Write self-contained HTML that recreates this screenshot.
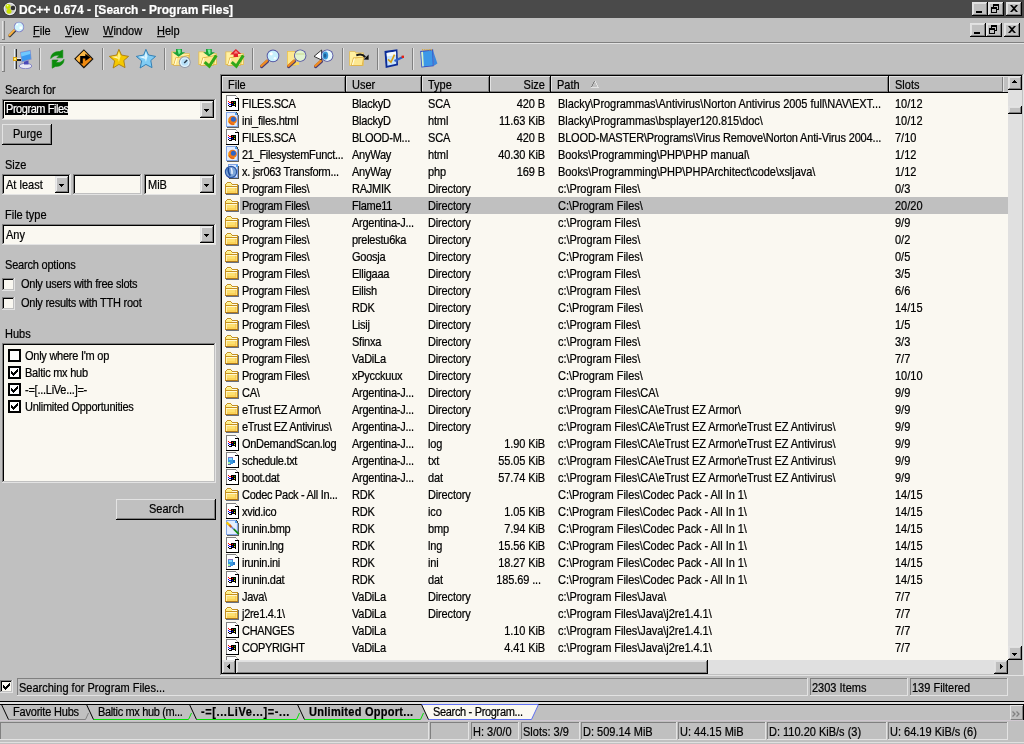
<!DOCTYPE html><html><head><meta charset="utf-8"><style>
html,body{margin:0;padding:0}
body{width:1024px;height:744px;overflow:hidden;background:#c0c0c0;position:relative;font-family:"Liberation Sans",sans-serif;font-size:11px;color:#000}
div,span,svg{position:absolute}
.t{white-space:pre;line-height:13px;font-size:11px;transform:scaleY(1.125);transform-origin:0 2px;-webkit-text-stroke-width:0.2px}
#w{left:0;top:0;width:1024px;height:744px;overflow:hidden;will-change:transform}
.b{font-weight:bold}
</style></head><body><div id="w">
<div style="left:0px;top:0px;width:1024px;height:18px;background:#4a4a4a;"></div>
<svg style="left:0px;top:0px" width="20" height="18" viewBox="0 0 20 18">
<circle cx="9.9" cy="8.9" r="7" fill="#101010" opacity="0.5"/><circle cx="9.9" cy="8.9" r="6.3" fill="#e8e8ea"/><circle cx="9.9" cy="8.9" r="5" fill="#c8c8cc"/>
<circle cx="13" cy="8" r="2.3" fill="#303030"/><circle cx="8" cy="6.6" r="2.5" fill="#c8e000"/><circle cx="9" cy="11.2" r="2.5" fill="#c8e000"/><circle cx="7.6" cy="5.6" r="0.9" fill="#f0ffa0"/></svg>
<span class="t b" style="left:19px;top:3px;font-size:12px;line-height:14px;color:#fff;transform:none">DC++ 0.674 - [Search - Program Files]</span>
<div style="left:972px;top:2px;width:16px;height:14px;background:#c0c0c0;"></div>
<div style="left:972px;top:2px;width:15px;height:1px;background:#e3e3e3;"></div>
<div style="left:972px;top:2px;width:1px;height:13px;background:#e3e3e3;"></div>
<div style="left:972px;top:15px;width:16px;height:1px;background:#000;"></div>
<div style="left:987px;top:2px;width:1px;height:14px;background:#000;"></div>
<div style="left:973px;top:14px;width:14px;height:1px;background:#808080;"></div>
<div style="left:986px;top:3px;width:1px;height:12px;background:#808080;"></div>
<div style="left:973px;top:3px;width:13px;height:1px;background:#e0e0e0;"></div>
<div style="left:973px;top:3px;width:1px;height:11px;background:#e0e0e0;"></div>
<div style="left:976px;top:11px;width:6px;height:2px;background:#000;"></div>
<div style="left:988px;top:2px;width:16px;height:14px;background:#c0c0c0;"></div>
<div style="left:988px;top:2px;width:15px;height:1px;background:#e3e3e3;"></div>
<div style="left:988px;top:2px;width:1px;height:13px;background:#e3e3e3;"></div>
<div style="left:988px;top:15px;width:16px;height:1px;background:#000;"></div>
<div style="left:1003px;top:2px;width:1px;height:14px;background:#000;"></div>
<div style="left:989px;top:14px;width:14px;height:1px;background:#808080;"></div>
<div style="left:1002px;top:3px;width:1px;height:12px;background:#808080;"></div>
<div style="left:989px;top:3px;width:13px;height:1px;background:#e0e0e0;"></div>
<div style="left:989px;top:3px;width:1px;height:11px;background:#e0e0e0;"></div>
<svg style="left:991px;top:4px" width="9" height="9" viewBox="0 0 9 9"><path d="M2 0h6v6h-2v-1h1v-3h-4v1h-1z M0 3h6v6h-6z M1 5v3h4v-3z" fill="#000" fill-rule="evenodd"/></svg>
<div style="left:1006px;top:2px;width:16px;height:14px;background:#c0c0c0;"></div>
<div style="left:1006px;top:2px;width:15px;height:1px;background:#e3e3e3;"></div>
<div style="left:1006px;top:2px;width:1px;height:13px;background:#e3e3e3;"></div>
<div style="left:1006px;top:15px;width:16px;height:1px;background:#000;"></div>
<div style="left:1021px;top:2px;width:1px;height:14px;background:#000;"></div>
<div style="left:1007px;top:14px;width:14px;height:1px;background:#808080;"></div>
<div style="left:1020px;top:3px;width:1px;height:12px;background:#808080;"></div>
<div style="left:1007px;top:3px;width:13px;height:1px;background:#e0e0e0;"></div>
<div style="left:1007px;top:3px;width:1px;height:11px;background:#e0e0e0;"></div>
<svg style="left:1010px;top:5px" width="8" height="7" viewBox="0 0 8 7"><path d="M0 0h2l2 2l2-2h2v0l-3 3.5l3 3.5h-2l-2-2l-2 2h-2l3-3.5z" fill="#000"/></svg>
<div style="left:2px;top:21px;width:1px;height:18px;background:#e3e3e3;"></div>
<div style="left:3px;top:21px;width:1px;height:18px;background:#c0c0c0;"></div>
<div style="left:4px;top:21px;width:1px;height:19px;background:#808080;"></div>
<div style="left:2px;top:39px;width:3px;height:1px;background:#808080;"></div>
<svg style="left:0px;top:18px" width="30" height="24" viewBox="0 0 30 24">
<path d="M9.8 17.6L15 12.4" stroke="#383838" stroke-width="3" stroke-linecap="round"/><path d="M9.4 17.2L14.4 12" stroke="#f8b040" stroke-width="2" stroke-linecap="round"/>
<circle cx="19" cy="9" r="5.2" fill="#8080c8"/><circle cx="19" cy="9" r="4.4" fill="#d0f4fc"/><rect x="19.5" y="8.5" width="2.5" height="2.5" fill="#fff"/><circle cx="17" cy="6.5" r="1" fill="#fff"/></svg>
<span class="t " style="left:33px;top:24px;"><u>F</u>ile</span>
<span class="t " style="left:65px;top:24px;"><u>V</u>iew</span>
<span class="t " style="left:103px;top:24px;"><u>W</u>indow</span>
<span class="t " style="left:157px;top:24px;"><u>H</u>elp</span>
<div style="left:970px;top:23px;width:16px;height:14px;background:#c0c0c0;"></div>
<div style="left:970px;top:23px;width:15px;height:1px;background:#e3e3e3;"></div>
<div style="left:970px;top:23px;width:1px;height:13px;background:#e3e3e3;"></div>
<div style="left:970px;top:36px;width:16px;height:1px;background:#000;"></div>
<div style="left:985px;top:23px;width:1px;height:14px;background:#000;"></div>
<div style="left:971px;top:35px;width:14px;height:1px;background:#808080;"></div>
<div style="left:984px;top:24px;width:1px;height:12px;background:#808080;"></div>
<div style="left:971px;top:24px;width:13px;height:1px;background:#e0e0e0;"></div>
<div style="left:971px;top:24px;width:1px;height:11px;background:#e0e0e0;"></div>
<div style="left:974px;top:32px;width:6px;height:2px;background:#000;"></div>
<div style="left:986px;top:23px;width:16px;height:14px;background:#c0c0c0;"></div>
<div style="left:986px;top:23px;width:15px;height:1px;background:#e3e3e3;"></div>
<div style="left:986px;top:23px;width:1px;height:13px;background:#e3e3e3;"></div>
<div style="left:986px;top:36px;width:16px;height:1px;background:#000;"></div>
<div style="left:1001px;top:23px;width:1px;height:14px;background:#000;"></div>
<div style="left:987px;top:35px;width:14px;height:1px;background:#808080;"></div>
<div style="left:1000px;top:24px;width:1px;height:12px;background:#808080;"></div>
<div style="left:987px;top:24px;width:13px;height:1px;background:#e0e0e0;"></div>
<div style="left:987px;top:24px;width:1px;height:11px;background:#e0e0e0;"></div>
<svg style="left:989px;top:25px" width="9" height="9" viewBox="0 0 9 9"><path d="M2 0h6v6h-2v-1h1v-3h-4v1h-1z M0 3h6v6h-6z M1 5v3h4v-3z" fill="#000" fill-rule="evenodd"/></svg>
<div style="left:1004px;top:23px;width:16px;height:14px;background:#c0c0c0;"></div>
<div style="left:1004px;top:23px;width:15px;height:1px;background:#e3e3e3;"></div>
<div style="left:1004px;top:23px;width:1px;height:13px;background:#e3e3e3;"></div>
<div style="left:1004px;top:36px;width:16px;height:1px;background:#000;"></div>
<div style="left:1019px;top:23px;width:1px;height:14px;background:#000;"></div>
<div style="left:1005px;top:35px;width:14px;height:1px;background:#808080;"></div>
<div style="left:1018px;top:24px;width:1px;height:12px;background:#808080;"></div>
<div style="left:1005px;top:24px;width:13px;height:1px;background:#e0e0e0;"></div>
<div style="left:1005px;top:24px;width:1px;height:11px;background:#e0e0e0;"></div>
<svg style="left:1008px;top:26px" width="8" height="7" viewBox="0 0 8 7"><path d="M0 0h2l2 2l2-2h2v0l-3 3.5l3 3.5h-2l-2-2l-2 2h-2l3-3.5z" fill="#000"/></svg>
<div style="left:0px;top:42px;width:1024px;height:1px;background:#808080;"></div>
<div style="left:0px;top:43px;width:1024px;height:1px;background:#e3e3e3;"></div>
<div style="left:2px;top:46px;width:1px;height:25px;background:#e3e3e3;"></div>
<div style="left:3px;top:46px;width:1px;height:25px;background:#c0c0c0;"></div>
<div style="left:4px;top:46px;width:1px;height:26px;background:#808080;"></div>
<div style="left:2px;top:71px;width:3px;height:1px;background:#808080;"></div>
<div style="left:39px;top:48px;width:1px;height:22px;background:#808080;"></div>
<div style="left:40px;top:48px;width:1px;height:22px;background:#e3e3e3;"></div>
<div style="left:102px;top:48px;width:1px;height:22px;background:#808080;"></div>
<div style="left:103px;top:48px;width:1px;height:22px;background:#e3e3e3;"></div>
<div style="left:164px;top:48px;width:1px;height:22px;background:#808080;"></div>
<div style="left:165px;top:48px;width:1px;height:22px;background:#e3e3e3;"></div>
<div style="left:252px;top:48px;width:1px;height:22px;background:#808080;"></div>
<div style="left:253px;top:48px;width:1px;height:22px;background:#e3e3e3;"></div>
<div style="left:342px;top:48px;width:1px;height:22px;background:#808080;"></div>
<div style="left:343px;top:48px;width:1px;height:22px;background:#e3e3e3;"></div>
<div style="left:377px;top:48px;width:1px;height:22px;background:#808080;"></div>
<div style="left:378px;top:48px;width:1px;height:22px;background:#e3e3e3;"></div>
<div style="left:412px;top:48px;width:1px;height:22px;background:#808080;"></div>
<div style="left:413px;top:48px;width:1px;height:22px;background:#e3e3e3;"></div>
<svg style="left:12px;top:49px" width="20" height="20" viewBox="0 0 20 20"><rect x="2" y="0" width="3" height="20" fill="#2a2a2a"/><rect x="2" y="0" width="1" height="20" fill="#e8eef4"/><rect x="3" y="0" width="1" height="20" fill="#98a0a8"/>
<rect x="5" y="10" width="4" height="2" fill="#202020"/><rect x="5" y="9" width="4" height="1" fill="#e8e8e8"/>
<rect x="1" y="8" width="4" height="4" fill="#d8a010"/><rect x="2" y="9" width="2" height="2" fill="#fff070"/>
<ellipse cx="13.5" cy="17" rx="6.3" ry="2.7" fill="#e8e8f4" stroke="#7878c0" stroke-width="0.9"/>
<path d="M12 12.5l4.5-1.2v4.2h-4.5z" fill="#4848b8"/>
<path d="M8 3L18.6 0.8L19.6 10.4L9.6 13.4z" fill="#8890c8"/><path d="M8.9 3.7L18 1.9L18.8 9.8L10.2 12.3z" fill="#3a98f0"/><path d="M8.9 3.7L18 1.9L18.3 5L9.4 7.5z" fill="#70c8ff"/></svg>
<svg style="left:47px;top:49px" width="20" height="20" viewBox="0 0 20 20"><g fill="#0c8c0c" stroke="#0c8c0c" stroke-width="0.6">
<path d="M3.8 9.6C3.6 5.2 7.5 2.2 12.6 2.6L15.8 1V8.8H9.8L12.2 6.4C8.8 5.8 5.6 7.2 3.8 9.6Z"/>
<path d="M17 10.2C17.2 14.8 13.4 17.8 8.4 17.4L5.2 19.2V11H11.2L8.8 13.4C12.2 14.2 15.2 12.8 17 10.2Z"/></g></svg>
<svg style="left:74px;top:49px" width="20" height="20" viewBox="0 0 20 20"><path d="M9.9 0.2L19.6 9.9L9.9 19.4L0.2 9.7z" fill="#141008"/><path d="M9.9 1.8L18 9.9L9.9 17.8L1.8 9.7z" fill="#f08a10"/><path d="M9.9 1.8L13 4.9L4.8 12.9L1.8 9.7z" fill="#f8b848"/>
<path d="M7.5 14.5V8.2H12.5" stroke="#000" stroke-width="2.6" fill="none"/><path d="M11.3 4.8L16.3 8.4L11.3 12z" fill="#000"/></svg>
<svg style="left:109px;top:49px" width="20" height="20" viewBox="0 0 20 20"><path d="M9.9 0.3L12.5 6L19.6 7.4L14.8 11.5L16 18.6L9.9 15.4L4.1 19L5.7 11.9L0.3 7.4L7.7 6Z" fill="#f4c800" stroke="#a87a10" stroke-width="0.9" stroke-linejoin="round"/><path d="M9.9 2.5L11.6 7L9.9 13L8.4 7z" fill="#fff27a"/><path d="M2.5 7.8L8 7.2L9.5 10z" fill="#fff6b0"/></svg>
<svg style="left:136px;top:49px" width="20" height="20" viewBox="0 0 20 20"><path d="M9.9 0.3L12.5 6L19.6 7.4L14.8 11.5L16 18.6L9.9 15.4L4.1 19L5.7 11.9L0.3 7.4L7.7 6Z" fill="#80ccf4" stroke="#2878b0" stroke-width="0.9" stroke-linejoin="round"/><path d="M9.9 2.5L11.6 7L9.9 13L8.4 7z" fill="#d8f4ff"/><path d="M2.5 7.8L8 7.2L9.5 10z" fill="#e8f8ff"/></svg>
<svg style="left:171px;top:49px" width="20" height="20" viewBox="0 0 20 20"><path d="M0.4 2.4H6.6L8 4.2H18.8V16H0.4z" fill="#e8c050"/><path d="M1.3 3.2H6.2L7.6 5H18V15H1.3z" fill="#fff0a0"/>
<path d="M2.2 16.8L4.5 8.4L18.8 5.8L15.6 16.8z" fill="#e0b040"/><path d="M3.2 16L5.2 9.2L17.8 6.8L15 16z" fill="#fde890"/><path d="M3.2 16L5.2 9.2L6.4 9L4.4 16z" fill="#fffce0"/><path d="M5 0H11V3.2H14.2L7.6 7.8L1.4 3.2H5z" fill="#18a038"/><path d="M6.4 0.6H9.6V3.8L7.8 5.6z" fill="#78f098"/>
<circle cx="13.8" cy="13.2" r="5.9" fill="#9098a8"/><circle cx="13.8" cy="13.2" r="4.9" fill="#e4f4fc"/><circle cx="13.8" cy="13.2" r="3.6" fill="#b8e0f8"/><path d="M13.2 14L16.2 11" stroke="#283848" stroke-width="1.4"/></svg>
<svg style="left:198px;top:49px" width="20" height="20" viewBox="0 0 20 20"><path d="M0.4 2.4H6.6L8 4.2H18.8V16H0.4z" fill="#e8c050"/><path d="M1.3 3.2H6.2L7.6 5H18V15H1.3z" fill="#fff0a0"/>
<path d="M2.2 16.8L4.5 8.4L18.8 5.8L15.6 16.8z" fill="#e0b040"/><path d="M3.2 16L5.2 9.2L17.8 6.8L15 16z" fill="#fde890"/><path d="M3.2 16L5.2 9.2L6.4 9L4.4 16z" fill="#fffce0"/><path d="M8 0H13.8V3.2H17L10.9 7.4L5.1 3.2H8z" fill="#18a038"/><path d="M9.5 0.6H12.5V4.5L10.9 5.6z" fill="#78f098"/>
<path d="M6.7 13.2L11.3 17.2L18.3 6.4" stroke="#30a818" stroke-width="3" fill="none" stroke-linejoin="miter"/></svg>
<svg style="left:225px;top:49px" width="20" height="20" viewBox="0 0 20 20"><path d="M0.4 2.4H6.6L8 4.2H18.8V16H0.4z" fill="#e8c050"/><path d="M1.3 3.2H6.2L7.6 5H18V15H1.3z" fill="#fff0a0"/>
<path d="M2.2 16.8L4.5 8.4L18.8 5.8L15.6 16.8z" fill="#e0b040"/><path d="M3.2 16L5.2 9.2L17.8 6.8L15 16z" fill="#fde890"/><path d="M3.2 16L5.2 9.2L6.4 9L4.4 16z" fill="#fffce0"/><path d="M10.9 0L16.2 4.9H13V8H8.6V5.4H5.1z" fill="#e02028"/><path d="M10.9 1.6L13.6 4.6H8.6z" fill="#f88080"/>
<path d="M6.7 13.2L11.3 17.2L18.3 6.4" stroke="#30a818" stroke-width="3" fill="none" stroke-linejoin="miter"/></svg>
<svg style="left:260px;top:49px" width="20" height="20" viewBox="0 0 20 20"><path d="M1.6 17.4L7.2 12.4" stroke="#4a3a70" stroke-width="3.4" stroke-linecap="round"/><path d="M1.3 16.8L6.8 11.8" stroke="#f08c20" stroke-width="2.4" stroke-linecap="round"/><circle cx="13" cy="6.9" r="6.3" fill="#5050a0"/><circle cx="13" cy="6.9" r="5.4" fill="#c8f0fc"/><circle cx="11.2" cy="4.8" r="1.6" fill="#fff"/><circle cx="15" cy="9.2" r="1.3" fill="#f4fcff"/></svg>
<svg style="left:287px;top:49px" width="20" height="20" viewBox="0 0 20 20"><path d="M0 2H8.7V16.8H0z" fill="#e8c050"/><path d="M0.8 2.8H8V16H0.8z" fill="#fde890"/><path d="M4 13H12V16H3z" fill="#f8d860"/><path d="M1.6 17.4L7.2 12.4" stroke="#4a3a70" stroke-width="3.4" stroke-linecap="round"/><path d="M1.3 16.8L6.8 11.8" stroke="#f08c20" stroke-width="2.4" stroke-linecap="round"/><circle cx="13.2" cy="6.6" r="6.2" fill="#5050a0"/><circle cx="13.2" cy="6.6" r="5.3" fill="#e0f4d0"/><path d="M8.5 5H17.5" stroke="#c8d890" stroke-width="1"/></svg>
<svg style="left:314px;top:49px" width="20" height="20" viewBox="0 0 20 20"><path d="M1.6 17.4L7.2 12.4" stroke="#4a3a70" stroke-width="3.4" stroke-linecap="round"/><path d="M1.3 16.8L6.8 11.8" stroke="#f08c20" stroke-width="2.4" stroke-linecap="round"/><path d="M0 7.4L7.6 1V11z" fill="#fff" stroke="#202020" stroke-width="0.9"/><circle cx="13.2" cy="6.6" r="6.2" fill="#5050a0"/><circle cx="13.2" cy="6.6" r="5.3" fill="#e8f8fc"/><ellipse cx="11.4" cy="6.6" rx="2.8" ry="4" fill="#3898d8"/><ellipse cx="11" cy="6.6" rx="1.4" ry="2.2" fill="#206098"/></svg>
<svg style="left:349px;top:49px" width="20" height="20" viewBox="0 0 20 20"><path d="M0.2 2.2H6L7.4 3.6H14.7V16.8H0.2z" fill="#e8c050"/><path d="M1 3H5.8L7 4.4H14V16H1z" fill="#fff0a0"/>
<path d="M1.8 16.8L4.1 8.6L15 7.7L13.6 16.8z" fill="#e0b040"/><path d="M2.8 16L4.8 9.4L14.2 8.5L12.8 16z" fill="#fde890"/><path d="M2.8 16L4.8 9.4L6 9.3L4 16z" fill="#fffce0"/>
<path d="M7.3 6.4C10.5 5 14.2 5.5 16.2 8.2" stroke="#181818" stroke-width="2" fill="none"/><path d="M14.6 10.6L19.6 5.6V10.8z" fill="#101010"/></svg>
<svg style="left:384px;top:49px" width="20" height="20" viewBox="0 0 20 20"><path d="M0.5 2.1L13.4 0.3L14 16.2L1.7 19.1z" fill="#0c2c98"/><path d="M2.6 3.9L12 2.6L12.3 14.8L3.4 16.8z" fill="#c8e4fc"/><path d="M2.6 3.9L12 2.6L12.1 6L2.9 7.5z" fill="#f4faff"/>
<path d="M4 10.3L7 13.2L10.5 5.6" stroke="#d8a010" stroke-width="1.6" fill="none"/><path d="M10.5 12L19 8" stroke="#3060c8" stroke-width="2"/><rect x="17.6" y="6.6" width="2.4" height="2.4" fill="#e82010"/></svg>
<svg style="left:419px;top:49px" width="20" height="20" viewBox="0 0 20 20"><path d="M14 1.5L18.4 14.6L14.6 17z" fill="#3a88e0"/><path d="M1.2 2.1L14.1 0.3L14.7 17.3L2.4 18.5z" fill="#3850c0"/><path d="M2.2 3L13.2 1.5L13.8 16.4L3.2 17.5z" fill="#3c98e8"/><path d="M2.2 3L4 2.8L4.8 17.3L3.2 17.5z" fill="#d8f0c8"/>
<path d="M3 0.8H13.6" stroke="#d8a840" stroke-width="1.4" stroke-dasharray="1.2 1"/></svg>
<span class="t " style="left:5px;top:83px;">Search for</span>
<div style="left:2px;top:99px;width:214px;height:21px;background:#faf8f1;"></div>
<div style="left:2px;top:99px;width:213px;height:1px;background:#808080;"></div>
<div style="left:2px;top:99px;width:1px;height:20px;background:#808080;"></div>
<div style="left:3px;top:100px;width:211px;height:1px;background:#000;"></div>
<div style="left:3px;top:100px;width:1px;height:18px;background:#000;"></div>
<div style="left:2px;top:119px;width:214px;height:1px;background:#e3e3e3;"></div>
<div style="left:215px;top:99px;width:1px;height:21px;background:#e3e3e3;"></div>
<div style="left:3px;top:118px;width:212px;height:1px;background:#c0c0c0;"></div>
<div style="left:214px;top:100px;width:1px;height:19px;background:#c0c0c0;"></div>
<div style="left:4px;top:118px;width:210px;height:1px;background:#faf8f1;"></div>
<div style="left:214px;top:100px;width:1px;height:19px;background:#e3e3e3;"></div>
<div style="left:200px;top:101px;width:14px;height:17px;background:#c0c0c0;"></div>
<div style="left:200px;top:101px;width:13px;height:1px;background:#e3e3e3;"></div>
<div style="left:200px;top:101px;width:1px;height:16px;background:#e3e3e3;"></div>
<div style="left:200px;top:117px;width:14px;height:1px;background:#000;"></div>
<div style="left:213px;top:101px;width:1px;height:17px;background:#000;"></div>
<div style="left:201px;top:116px;width:12px;height:1px;background:#808080;"></div>
<div style="left:212px;top:102px;width:1px;height:15px;background:#808080;"></div>
<div style="left:201px;top:102px;width:11px;height:1px;background:#ececec;"></div>
<div style="left:201px;top:102px;width:1px;height:14px;background:#ececec;"></div>
<div style="left:204px;top:109px;width:5px;height:1px;background:#000;"></div>
<div style="left:205px;top:110px;width:3px;height:1px;background:#000;"></div>
<div style="left:206px;top:111px;width:1px;height:1px;background:#000;"></div>
<div style="left:5px;top:102px;width:63px;height:13px;background:#000;"></div>
<span class="t " style="left:6px;top:102px;color:#fff;letter-spacing:-0.45px">Program Files</span>
<div style="left:2px;top:124px;width:50px;height:21px;background:#c0c0c0;"></div>
<div style="left:2px;top:124px;width:49px;height:1px;background:#e3e3e3;"></div>
<div style="left:2px;top:124px;width:1px;height:20px;background:#e3e3e3;"></div>
<div style="left:2px;top:144px;width:50px;height:1px;background:#000;"></div>
<div style="left:51px;top:124px;width:1px;height:21px;background:#000;"></div>
<div style="left:3px;top:143px;width:48px;height:1px;background:#808080;"></div>
<div style="left:50px;top:125px;width:1px;height:19px;background:#808080;"></div>
<span class="t " style="left:13px;top:127px;">Purge</span>
<span class="t " style="left:5px;top:158px;">Size</span>
<div style="left:2px;top:174px;width:69px;height:21px;background:#faf8f1;"></div>
<div style="left:2px;top:174px;width:68px;height:1px;background:#808080;"></div>
<div style="left:2px;top:174px;width:1px;height:20px;background:#808080;"></div>
<div style="left:3px;top:175px;width:66px;height:1px;background:#000;"></div>
<div style="left:3px;top:175px;width:1px;height:18px;background:#000;"></div>
<div style="left:2px;top:194px;width:69px;height:1px;background:#e3e3e3;"></div>
<div style="left:70px;top:174px;width:1px;height:21px;background:#e3e3e3;"></div>
<div style="left:3px;top:193px;width:67px;height:1px;background:#c0c0c0;"></div>
<div style="left:69px;top:175px;width:1px;height:19px;background:#c0c0c0;"></div>
<div style="left:4px;top:193px;width:65px;height:1px;background:#faf8f1;"></div>
<div style="left:69px;top:175px;width:1px;height:19px;background:#e3e3e3;"></div>
<div style="left:55px;top:176px;width:14px;height:17px;background:#c0c0c0;"></div>
<div style="left:55px;top:176px;width:13px;height:1px;background:#e3e3e3;"></div>
<div style="left:55px;top:176px;width:1px;height:16px;background:#e3e3e3;"></div>
<div style="left:55px;top:192px;width:14px;height:1px;background:#000;"></div>
<div style="left:68px;top:176px;width:1px;height:17px;background:#000;"></div>
<div style="left:56px;top:191px;width:12px;height:1px;background:#808080;"></div>
<div style="left:67px;top:177px;width:1px;height:15px;background:#808080;"></div>
<div style="left:56px;top:177px;width:11px;height:1px;background:#ececec;"></div>
<div style="left:56px;top:177px;width:1px;height:14px;background:#ececec;"></div>
<div style="left:59px;top:184px;width:5px;height:1px;background:#000;"></div>
<div style="left:60px;top:185px;width:3px;height:1px;background:#000;"></div>
<div style="left:61px;top:186px;width:1px;height:1px;background:#000;"></div>
<span class="t " style="left:6px;top:178px;">At least</span>
<div style="left:73px;top:174px;width:69px;height:21px;background:#faf8f1;"></div>
<div style="left:73px;top:174px;width:68px;height:1px;background:#808080;"></div>
<div style="left:73px;top:174px;width:1px;height:20px;background:#808080;"></div>
<div style="left:74px;top:175px;width:66px;height:1px;background:#000;"></div>
<div style="left:74px;top:175px;width:1px;height:18px;background:#000;"></div>
<div style="left:73px;top:194px;width:69px;height:1px;background:#e3e3e3;"></div>
<div style="left:141px;top:174px;width:1px;height:21px;background:#e3e3e3;"></div>
<div style="left:74px;top:193px;width:67px;height:1px;background:#c0c0c0;"></div>
<div style="left:140px;top:175px;width:1px;height:19px;background:#c0c0c0;"></div>
<div style="left:144px;top:174px;width:72px;height:21px;background:#faf8f1;"></div>
<div style="left:144px;top:174px;width:71px;height:1px;background:#808080;"></div>
<div style="left:144px;top:174px;width:1px;height:20px;background:#808080;"></div>
<div style="left:145px;top:175px;width:69px;height:1px;background:#000;"></div>
<div style="left:145px;top:175px;width:1px;height:18px;background:#000;"></div>
<div style="left:144px;top:194px;width:72px;height:1px;background:#e3e3e3;"></div>
<div style="left:215px;top:174px;width:1px;height:21px;background:#e3e3e3;"></div>
<div style="left:145px;top:193px;width:70px;height:1px;background:#c0c0c0;"></div>
<div style="left:214px;top:175px;width:1px;height:19px;background:#c0c0c0;"></div>
<div style="left:146px;top:193px;width:68px;height:1px;background:#faf8f1;"></div>
<div style="left:214px;top:175px;width:1px;height:19px;background:#e3e3e3;"></div>
<div style="left:200px;top:176px;width:14px;height:17px;background:#c0c0c0;"></div>
<div style="left:200px;top:176px;width:13px;height:1px;background:#e3e3e3;"></div>
<div style="left:200px;top:176px;width:1px;height:16px;background:#e3e3e3;"></div>
<div style="left:200px;top:192px;width:14px;height:1px;background:#000;"></div>
<div style="left:213px;top:176px;width:1px;height:17px;background:#000;"></div>
<div style="left:201px;top:191px;width:12px;height:1px;background:#808080;"></div>
<div style="left:212px;top:177px;width:1px;height:15px;background:#808080;"></div>
<div style="left:201px;top:177px;width:11px;height:1px;background:#ececec;"></div>
<div style="left:201px;top:177px;width:1px;height:14px;background:#ececec;"></div>
<div style="left:204px;top:184px;width:5px;height:1px;background:#000;"></div>
<div style="left:205px;top:185px;width:3px;height:1px;background:#000;"></div>
<div style="left:206px;top:186px;width:1px;height:1px;background:#000;"></div>
<span class="t " style="left:148px;top:178px;">MiB</span>
<span class="t " style="left:5px;top:208px;">File type</span>
<div style="left:2px;top:224px;width:214px;height:21px;background:#faf8f1;"></div>
<div style="left:2px;top:224px;width:213px;height:1px;background:#808080;"></div>
<div style="left:2px;top:224px;width:1px;height:20px;background:#808080;"></div>
<div style="left:3px;top:225px;width:211px;height:1px;background:#000;"></div>
<div style="left:3px;top:225px;width:1px;height:18px;background:#000;"></div>
<div style="left:2px;top:244px;width:214px;height:1px;background:#e3e3e3;"></div>
<div style="left:215px;top:224px;width:1px;height:21px;background:#e3e3e3;"></div>
<div style="left:3px;top:243px;width:212px;height:1px;background:#c0c0c0;"></div>
<div style="left:214px;top:225px;width:1px;height:19px;background:#c0c0c0;"></div>
<div style="left:4px;top:243px;width:210px;height:1px;background:#faf8f1;"></div>
<div style="left:214px;top:225px;width:1px;height:19px;background:#e3e3e3;"></div>
<div style="left:200px;top:226px;width:14px;height:17px;background:#c0c0c0;"></div>
<div style="left:200px;top:226px;width:13px;height:1px;background:#e3e3e3;"></div>
<div style="left:200px;top:226px;width:1px;height:16px;background:#e3e3e3;"></div>
<div style="left:200px;top:242px;width:14px;height:1px;background:#000;"></div>
<div style="left:213px;top:226px;width:1px;height:17px;background:#000;"></div>
<div style="left:201px;top:241px;width:12px;height:1px;background:#808080;"></div>
<div style="left:212px;top:227px;width:1px;height:15px;background:#808080;"></div>
<div style="left:201px;top:227px;width:11px;height:1px;background:#ececec;"></div>
<div style="left:201px;top:227px;width:1px;height:14px;background:#ececec;"></div>
<div style="left:204px;top:234px;width:5px;height:1px;background:#000;"></div>
<div style="left:205px;top:235px;width:3px;height:1px;background:#000;"></div>
<div style="left:206px;top:236px;width:1px;height:1px;background:#000;"></div>
<span class="t " style="left:6px;top:228px;">Any</span>
<span class="t " style="left:5px;top:258px;letter-spacing:-0.2px">Search options</span>
<div style="left:2px;top:278px;width:13px;height:13px;background:#faf8f1;"></div>
<div style="left:2px;top:278px;width:12px;height:1px;background:#808080;"></div>
<div style="left:2px;top:278px;width:1px;height:12px;background:#808080;"></div>
<div style="left:3px;top:279px;width:10px;height:1px;background:#000;"></div>
<div style="left:3px;top:279px;width:1px;height:10px;background:#000;"></div>
<div style="left:2px;top:290px;width:13px;height:1px;background:#e3e3e3;"></div>
<div style="left:14px;top:278px;width:1px;height:13px;background:#e3e3e3;"></div>
<div style="left:3px;top:289px;width:11px;height:1px;background:#c0c0c0;"></div>
<div style="left:13px;top:279px;width:1px;height:11px;background:#c0c0c0;"></div>
<span class="t " style="left:21px;top:277px;letter-spacing:-0.25px">Only users with free slots</span>
<div style="left:2px;top:297px;width:13px;height:13px;background:#faf8f1;"></div>
<div style="left:2px;top:297px;width:12px;height:1px;background:#808080;"></div>
<div style="left:2px;top:297px;width:1px;height:12px;background:#808080;"></div>
<div style="left:3px;top:298px;width:10px;height:1px;background:#000;"></div>
<div style="left:3px;top:298px;width:1px;height:10px;background:#000;"></div>
<div style="left:2px;top:309px;width:13px;height:1px;background:#e3e3e3;"></div>
<div style="left:14px;top:297px;width:1px;height:13px;background:#e3e3e3;"></div>
<div style="left:3px;top:308px;width:11px;height:1px;background:#c0c0c0;"></div>
<div style="left:13px;top:298px;width:1px;height:11px;background:#c0c0c0;"></div>
<span class="t " style="left:21px;top:296px;letter-spacing:-0.25px">Only results with TTH root</span>
<span class="t " style="left:5px;top:327px;">Hubs</span>
<div style="left:2px;top:343px;width:214px;height:140px;background:#faf8f1;"></div>
<div style="left:2px;top:343px;width:213px;height:1px;background:#808080;"></div>
<div style="left:2px;top:343px;width:1px;height:139px;background:#808080;"></div>
<div style="left:3px;top:344px;width:211px;height:1px;background:#000;"></div>
<div style="left:3px;top:344px;width:1px;height:137px;background:#000;"></div>
<div style="left:2px;top:482px;width:214px;height:1px;background:#e3e3e3;"></div>
<div style="left:215px;top:343px;width:1px;height:140px;background:#e3e3e3;"></div>
<div style="left:3px;top:481px;width:212px;height:1px;background:#c0c0c0;"></div>
<div style="left:214px;top:344px;width:1px;height:138px;background:#c0c0c0;"></div>
<div style="left:8px;top:349px;width:13px;height:13px;background:#000;"></div>
<div style="left:10px;top:351px;width:9px;height:9px;background:#fff;"></div>
<span class="t " style="left:25px;top:349px;letter-spacing:-0.25px">Only where I'm op</span>
<div style="left:8px;top:366px;width:13px;height:13px;background:#000;"></div>
<div style="left:10px;top:368px;width:9px;height:9px;background:#fff;"></div>
<svg style="position:absolute;left:11px;top:369px" width="7" height="7" viewBox="0 0 7 7"><path d="M0 2h1v1h1v1h1v-1h1v-1h1v-1h1v-1h1v3h-1v1h-1v1h-1v1h-1v1h-1v-1h-1v-1h-1v-1h-1z" fill="#000"/></svg>
<span class="t " style="left:25px;top:366px;letter-spacing:-0.25px">Baltic mx hub</span>
<div style="left:8px;top:383px;width:13px;height:13px;background:#000;"></div>
<div style="left:10px;top:385px;width:9px;height:9px;background:#fff;"></div>
<svg style="position:absolute;left:11px;top:386px" width="7" height="7" viewBox="0 0 7 7"><path d="M0 2h1v1h1v1h1v-1h1v-1h1v-1h1v-1h1v3h-1v1h-1v1h-1v1h-1v1h-1v-1h-1v-1h-1v-1h-1z" fill="#000"/></svg>
<span class="t " style="left:25px;top:383px;letter-spacing:-0.25px">-=[...LiVe...]=-</span>
<div style="left:8px;top:400px;width:13px;height:13px;background:#000;"></div>
<div style="left:10px;top:402px;width:9px;height:9px;background:#fff;"></div>
<svg style="position:absolute;left:11px;top:403px" width="7" height="7" viewBox="0 0 7 7"><path d="M0 2h1v1h1v1h1v-1h1v-1h1v-1h1v-1h1v3h-1v1h-1v1h-1v1h-1v1h-1v-1h-1v-1h-1v-1h-1z" fill="#000"/></svg>
<span class="t " style="left:25px;top:400px;letter-spacing:-0.25px">Unlimited Opportunities</span>
<div style="left:116px;top:499px;width:100px;height:21px;background:#c0c0c0;"></div>
<div style="left:116px;top:499px;width:99px;height:1px;background:#e3e3e3;"></div>
<div style="left:116px;top:499px;width:1px;height:20px;background:#e3e3e3;"></div>
<div style="left:116px;top:519px;width:100px;height:1px;background:#000;"></div>
<div style="left:215px;top:499px;width:1px;height:21px;background:#000;"></div>
<div style="left:117px;top:518px;width:98px;height:1px;background:#808080;"></div>
<div style="left:214px;top:500px;width:1px;height:19px;background:#808080;"></div>
<span class="t " style="left:149px;top:502px;">Search</span>
<div style="left:220px;top:74px;width:804px;height:602px;background:#faf8f1;"></div>
<div style="left:220px;top:74px;width:803px;height:1px;background:#808080;"></div>
<div style="left:220px;top:74px;width:1px;height:601px;background:#808080;"></div>
<div style="left:221px;top:75px;width:801px;height:1px;background:#000;"></div>
<div style="left:221px;top:75px;width:1px;height:599px;background:#000;"></div>
<div style="left:220px;top:675px;width:804px;height:1px;background:#e3e3e3;"></div>
<div style="left:1023px;top:74px;width:1px;height:602px;background:#e3e3e3;"></div>
<div style="left:221px;top:674px;width:802px;height:1px;background:#c0c0c0;"></div>
<div style="left:1022px;top:75px;width:1px;height:600px;background:#c0c0c0;"></div>
<div style="left:222px;top:76px;width:786px;height:17px;background:#c0c0c0;"></div>
<div style="left:222px;top:76px;width:123px;height:1px;background:#e3e3e3;"></div>
<div style="left:222px;top:76px;width:1px;height:16px;background:#e3e3e3;"></div>
<div style="left:344px;top:77px;width:1px;height:15px;background:#808080;"></div>
<div style="left:345px;top:76px;width:1px;height:17px;background:#000;"></div>
<div style="left:222px;top:91px;width:123px;height:1px;background:#808080;"></div>
<span class="t " style="left:228px;top:78px;">File</span>
<div style="left:346px;top:76px;width:75px;height:1px;background:#e3e3e3;"></div>
<div style="left:346px;top:76px;width:1px;height:16px;background:#e3e3e3;"></div>
<div style="left:420px;top:77px;width:1px;height:15px;background:#808080;"></div>
<div style="left:421px;top:76px;width:1px;height:17px;background:#000;"></div>
<div style="left:346px;top:91px;width:75px;height:1px;background:#808080;"></div>
<span class="t " style="left:352px;top:78px;">User</span>
<div style="left:422px;top:76px;width:67px;height:1px;background:#e3e3e3;"></div>
<div style="left:422px;top:76px;width:1px;height:16px;background:#e3e3e3;"></div>
<div style="left:488px;top:77px;width:1px;height:15px;background:#808080;"></div>
<div style="left:489px;top:76px;width:1px;height:17px;background:#000;"></div>
<div style="left:422px;top:91px;width:67px;height:1px;background:#808080;"></div>
<span class="t " style="left:428px;top:78px;">Type</span>
<div style="left:490px;top:76px;width:60px;height:1px;background:#e3e3e3;"></div>
<div style="left:490px;top:76px;width:1px;height:16px;background:#e3e3e3;"></div>
<div style="left:549px;top:77px;width:1px;height:15px;background:#808080;"></div>
<div style="left:550px;top:76px;width:1px;height:17px;background:#000;"></div>
<div style="left:490px;top:91px;width:60px;height:1px;background:#808080;"></div>
<span class="t" style="left:490px;width:55px;text-align:right;top:78px">Size</span>
<div style="left:551px;top:76px;width:337px;height:1px;background:#e3e3e3;"></div>
<div style="left:551px;top:76px;width:1px;height:16px;background:#e3e3e3;"></div>
<div style="left:887px;top:77px;width:1px;height:15px;background:#808080;"></div>
<div style="left:888px;top:76px;width:1px;height:17px;background:#000;"></div>
<div style="left:551px;top:91px;width:337px;height:1px;background:#808080;"></div>
<span class="t " style="left:557px;top:78px;">Path</span>
<div style="left:889px;top:76px;width:114px;height:1px;background:#e3e3e3;"></div>
<div style="left:889px;top:76px;width:1px;height:16px;background:#e3e3e3;"></div>
<div style="left:1002px;top:77px;width:1px;height:15px;background:#808080;"></div>
<div style="left:1003px;top:76px;width:1px;height:17px;background:#000;"></div>
<div style="left:889px;top:91px;width:114px;height:1px;background:#808080;"></div>
<span class="t " style="left:895px;top:78px;">Slots</span>
<div style="left:1004px;top:76px;width:4px;height:1px;background:#e3e3e3;"></div>
<div style="left:1003px;top:76px;width:1px;height:17px;background:#e3e3e3;"></div>
<div style="left:222px;top:92px;width:786px;height:1px;background:#000;"></div>
<div style="left:594px;top:81px;width:1px;height:1px;background:#808080;"></div>
<div style="left:593px;top:82px;width:1px;height:1px;background:#808080;"></div>
<div style="left:593px;top:83px;width:1px;height:1px;background:#808080;"></div>
<div style="left:592px;top:84px;width:1px;height:1px;background:#808080;"></div>
<div style="left:592px;top:85px;width:1px;height:1px;background:#808080;"></div>
<div style="left:591px;top:86px;width:1px;height:1px;background:#808080;"></div>
<div style="left:595px;top:81px;width:1px;height:1px;background:#e3e3e3;"></div>
<div style="left:595px;top:82px;width:1px;height:1px;background:#e3e3e3;"></div>
<div style="left:596px;top:83px;width:1px;height:1px;background:#e3e3e3;"></div>
<div style="left:596px;top:84px;width:1px;height:1px;background:#e3e3e3;"></div>
<div style="left:597px;top:85px;width:1px;height:1px;background:#e3e3e3;"></div>
<div style="left:597px;top:86px;width:1px;height:1px;background:#e3e3e3;"></div>
<div style="left:591px;top:87px;width:8px;height:1px;background:#e3e3e3;"></div>
<svg style="left:0;top:0" width="0" height="0"><defs><symbol id="i_app" viewBox="0 0 16 16"><g shape-rendering="crispEdges"><rect x="3" y="1" width="9" height="14" fill="#fff"/><rect x="12" y="4" width="2" height="11" fill="#fff"/><rect x="12" y="2" width="1" height="2" fill="#fff"/>
<rect x="2" y="0" width="10" height="1" fill="#808080"/><rect x="2" y="0" width="1" height="15" fill="#808080"/><rect x="12" y="1" width="1" height="1" fill="#b0b0b0"/><rect x="13" y="2" width="1" height="1" fill="#b0b0b0"/>
<rect x="11" y="3" width="4" height="1" fill="#000"/><rect x="14" y="3" width="1" height="13" fill="#000"/><rect x="2" y="15" width="13" height="1" fill="#000"/><rect x="4" y="6" width="1" height="1" fill="#f00"/><rect x="5" y="7" width="2" height="1" fill="#f00"/><rect x="4" y="8" width="1" height="1" fill="#00f"/><rect x="5" y="9" width="2" height="1" fill="#00f"/><rect x="4" y="10" width="1" height="1" fill="#000"/><rect x="5" y="11" width="2" height="1" fill="#000"/>
<rect x="7" y="6" width="5" height="6" fill="#000"/><rect x="8" y="7" width="1" height="1" fill="#f00"/><rect x="10" y="7" width="1" height="1" fill="#0a0"/><rect x="8" y="9" width="1" height="1" fill="#00f"/><rect x="10" y="9" width="1" height="1" fill="#ee0"/><rect x="8" y="11" width="3" height="1" fill="#fff"/></g></symbol><symbol id="i_txt" viewBox="0 0 16 16"><g shape-rendering="crispEdges"><rect x="3" y="1" width="9" height="14" fill="#fff"/><rect x="12" y="4" width="2" height="11" fill="#fff"/><rect x="12" y="2" width="1" height="2" fill="#fff"/>
<rect x="2" y="0" width="10" height="1" fill="#808080"/><rect x="2" y="0" width="1" height="15" fill="#808080"/><rect x="12" y="1" width="1" height="1" fill="#b0b0b0"/><rect x="13" y="2" width="1" height="1" fill="#b0b0b0"/>
<rect x="11" y="3" width="4" height="1" fill="#000"/><rect x="14" y="3" width="1" height="13" fill="#000"/><rect x="2" y="15" width="13" height="1" fill="#000"/><rect x="4" y="5" width="5" height="7" fill="#3898e0"/><rect x="4" y="5" width="5" height="1" fill="#8070c0"/><rect x="5" y="6" width="3" height="2" fill="#80d8ff"/><rect x="4" y="10" width="2" height="2" fill="#a0f0a0"/><rect x="4" y="12" width="3" height="1" fill="#6060a0"/><rect x="9" y="8" width="2" height="3" fill="#2878c8"/></g></symbol><symbol id="i_html" viewBox="0 0 16 16"><g shape-rendering="crispEdges"><rect x="2" y="0" width="10" height="15" fill="#80a4e4"/><rect x="12" y="2" width="2" height="13" fill="#80a4e4"/><rect x="3" y="1" width="9" height="13" fill="#e4eeff"/><rect x="12" y="3" width="1" height="11" fill="#d8e4ff"/>
<rect x="11" y="1" width="2" height="2" fill="#50a0f0"/><rect x="3" y="15" width="12" height="1" fill="#606060"/><rect x="14" y="3" width="1" height="12" fill="#606060"/><rect x="12" y="0" width="1" height="1" fill="#404040"/><rect x="13" y="1" width="1" height="2" fill="#404040"/></g><circle cx="8.6" cy="8" r="4.3" fill="#f07818"/><circle cx="9.4" cy="7.2" r="2.5" fill="#2c64c8"/><path d="M5.2 6.5A4 4 0 0 0 11 11.8" stroke="#f8b830" stroke-width="1.1" fill="none"/><path d="M5 9.5A4 4 0 0 0 10 12.3" stroke="#d83010" stroke-width="0.8" fill="none"/></symbol><symbol id="i_bmp" viewBox="0 0 16 16"><g shape-rendering="crispEdges"><rect x="2" y="0" width="10" height="15" fill="#80a4e4"/><rect x="12" y="2" width="2" height="13" fill="#80a4e4"/><rect x="3" y="1" width="9" height="13" fill="#e4eeff"/><rect x="12" y="3" width="1" height="11" fill="#d8e4ff"/>
<rect x="11" y="1" width="2" height="2" fill="#50a0f0"/><rect x="3" y="15" width="12" height="1" fill="#606060"/><rect x="14" y="3" width="1" height="12" fill="#606060"/><rect x="12" y="0" width="1" height="1" fill="#404040"/><rect x="13" y="1" width="1" height="2" fill="#404040"/></g><path d="M2.6 2.4L5.8 5.4" stroke="#f8c800" stroke-width="2.2"/><path d="M5.4 5L7.6 7.2" stroke="#d06020" stroke-width="2.2"/><path d="M7.4 7L10 9.4" stroke="#7080d0" stroke-width="1.6"/><path d="M9.8 9.2L14.8 14.2" stroke="#108a10" stroke-width="1.8"/></symbol><symbol id="i_php" viewBox="0 0 16 16"><g shape-rendering="crispEdges"><rect x="4" y="1" width="10" height="14" fill="#80a4e4"/><rect x="5" y="2" width="8" height="12" fill="#dce8ff"/><rect x="12" y="2" width="2" height="2" fill="#50a0f0"/><rect x="5" y="15" width="10" height="1" fill="#505050"/><rect x="14" y="3" width="1" height="12" fill="#505050"/></g>
<circle cx="7" cy="9" r="6.2" fill="#2c58a8"/><circle cx="7" cy="9" r="5" fill="#7ca4d8"/><path d="M4.6 4.8C3.8 8 5 11 6.4 12.6" stroke="#1c4898" stroke-width="1.6" fill="none"/><path d="M7.2 5C8 7 8.4 9 8 11" stroke="#eef4ff" stroke-width="1.5" fill="none"/><path d="M3 12.5L5.5 15" stroke="#4050b0" stroke-width="1"/></symbol><symbol id="i_folder" viewBox="0 0 16 16"><g shape-rendering="crispEdges"><rect x="2" y="14" width="12" height="1" fill="#687080"/><rect x="14" y="5" width="1" height="10" fill="#687080"/>
<rect x="3" y="2" width="4" height="1" fill="#c49024"/><rect x="2" y="3" width="1" height="1" fill="#c49024"/><rect x="7" y="3" width="1" height="1" fill="#c49024"/><rect x="1" y="4" width="1" height="10" fill="#c49024"/><rect x="8" y="4" width="5" height="1" fill="#c49024"/><rect x="13" y="4" width="1" height="10" fill="#c49024"/><rect x="1" y="6" width="13" height="1" fill="#c8901c"/><rect x="1" y="13" width="13" height="1" fill="#b07818"/>
<rect x="3" y="3" width="4" height="1" fill="#fff8a8"/><rect x="2" y="4" width="6" height="2" fill="#fff088"/><rect x="8" y="5" width="5" height="1" fill="#fffce8"/>
<rect x="2" y="7" width="11" height="6" fill="#fde070"/><rect x="2" y="7" width="11" height="1" fill="#fff8d0"/><rect x="2" y="8" width="1" height="5" fill="#fff4b0"/><rect x="11" y="8" width="1" height="5" fill="#f8c860"/><rect x="3" y="11" width="8" height="2" fill="#fcd458"/></g></symbol></defs></svg>
<div style="left:222px;top:93px;width:786px;height:567px;overflow:hidden">
<svg style="left:2px;top:2px" width="16" height="16"><use href="#i_app"/></svg>
<span class="t" style="left:20px;top:4px;letter-spacing:-0.3px">FILES.SCA</span>
<span class="t" style="left:130px;top:4px;letter-spacing:-0.25px">BlackyD</span>
<span class="t" style="left:206px;top:4px;letter-spacing:-0.15px">SCA</span>
<span class="t" style="left:258px;width:65px;text-align:right;top:4px;letter-spacing:-0.1px">420 B</span>
<span class="t" style="left:336px;top:4px;letter-spacing:-0.05px">Blacky\Programmas\Antivirus\Norton Antivirus 2005 full\NAV\EXT...</span>
<span class="t" style="left:673px;top:4px">10/12</span>
<svg style="left:2px;top:19px" width="16" height="16"><use href="#i_html"/></svg>
<span class="t" style="left:20px;top:21px;letter-spacing:-0.3px">ini_files.html</span>
<span class="t" style="left:130px;top:21px;letter-spacing:-0.25px">BlackyD</span>
<span class="t" style="left:206px;top:21px;letter-spacing:-0.15px">html</span>
<span class="t" style="left:258px;width:65px;text-align:right;top:21px;letter-spacing:-0.1px">11.63 KiB</span>
<span class="t" style="left:336px;top:21px;letter-spacing:-0.05px">Blacky\Programmas\bsplayer120.815\doc\</span>
<span class="t" style="left:673px;top:21px">10/12</span>
<svg style="left:2px;top:36px" width="16" height="16"><use href="#i_app"/></svg>
<span class="t" style="left:20px;top:38px;letter-spacing:-0.3px">FILES.SCA</span>
<span class="t" style="left:130px;top:38px;letter-spacing:-0.25px">BLOOD-M...</span>
<span class="t" style="left:206px;top:38px;letter-spacing:-0.15px">SCA</span>
<span class="t" style="left:258px;width:65px;text-align:right;top:38px;letter-spacing:-0.1px">420 B</span>
<span class="t" style="left:336px;top:38px;letter-spacing:-0.17px">BLOOD-MASTER\Programs\Virus Remove\Norton Anti-Virus 2004...</span>
<span class="t" style="left:673px;top:38px">7/10</span>
<svg style="left:2px;top:53px" width="16" height="16"><use href="#i_html"/></svg>
<span class="t" style="left:20px;top:55px;letter-spacing:-0.3px">21_FilesystemFunct...</span>
<span class="t" style="left:130px;top:55px;letter-spacing:-0.25px">AnyWay</span>
<span class="t" style="left:206px;top:55px;letter-spacing:-0.15px">html</span>
<span class="t" style="left:258px;width:65px;text-align:right;top:55px;letter-spacing:-0.1px">40.30 KiB</span>
<span class="t" style="left:336px;top:55px;letter-spacing:-0.05px">Books\Programming\PHP\PHP manual\</span>
<span class="t" style="left:673px;top:55px">1/12</span>
<svg style="left:2px;top:70px" width="16" height="16"><use href="#i_php"/></svg>
<span class="t" style="left:20px;top:72px;letter-spacing:-0.3px">x. jsr063 Transform...</span>
<span class="t" style="left:130px;top:72px;letter-spacing:-0.25px">AnyWay</span>
<span class="t" style="left:206px;top:72px;letter-spacing:-0.15px">php</span>
<span class="t" style="left:258px;width:65px;text-align:right;top:72px;letter-spacing:-0.1px">169 B</span>
<span class="t" style="left:336px;top:72px;letter-spacing:-0.05px">Books\Programming\PHP\PHPArchitect\code\xsljava\</span>
<span class="t" style="left:673px;top:72px">1/12</span>
<svg style="left:2px;top:87px" width="16" height="16"><use href="#i_folder"/></svg>
<span class="t" style="left:20px;top:89px;letter-spacing:-0.3px">Program Files\</span>
<span class="t" style="left:130px;top:89px;letter-spacing:-0.25px">RAJMIK</span>
<span class="t" style="left:206px;top:89px;letter-spacing:-0.15px">Directory</span>
<span class="t" style="left:258px;width:65px;text-align:right;top:89px;letter-spacing:-0.1px"></span>
<span class="t" style="left:336px;top:89px;letter-spacing:-0.05px">c:\Program Files\</span>
<span class="t" style="left:673px;top:89px">0/3</span>
<div style="left:18px;top:104px;width:768px;height:17px;background:#c0c0c0"></div>
<svg style="left:2px;top:104px" width="16" height="16"><use href="#i_folder"/></svg>
<span class="t" style="left:20px;top:106px;letter-spacing:-0.3px">Program Files\</span>
<span class="t" style="left:130px;top:106px;letter-spacing:-0.25px">Flame11</span>
<span class="t" style="left:206px;top:106px;letter-spacing:-0.15px">Directory</span>
<span class="t" style="left:258px;width:65px;text-align:right;top:106px;letter-spacing:-0.1px"></span>
<span class="t" style="left:336px;top:106px;letter-spacing:-0.05px">C:\Program Files\</span>
<span class="t" style="left:673px;top:106px">20/20</span>
<svg style="left:2px;top:121px" width="16" height="16"><use href="#i_folder"/></svg>
<span class="t" style="left:20px;top:123px;letter-spacing:-0.3px">Program Files\</span>
<span class="t" style="left:130px;top:123px;letter-spacing:-0.25px">Argentina-J...</span>
<span class="t" style="left:206px;top:123px;letter-spacing:-0.15px">Directory</span>
<span class="t" style="left:258px;width:65px;text-align:right;top:123px;letter-spacing:-0.1px"></span>
<span class="t" style="left:336px;top:123px;letter-spacing:-0.05px">c:\Program Files\</span>
<span class="t" style="left:673px;top:123px">9/9</span>
<svg style="left:2px;top:138px" width="16" height="16"><use href="#i_folder"/></svg>
<span class="t" style="left:20px;top:140px;letter-spacing:-0.3px">Program Files\</span>
<span class="t" style="left:130px;top:140px;letter-spacing:-0.25px">prelestu6ka</span>
<span class="t" style="left:206px;top:140px;letter-spacing:-0.15px">Directory</span>
<span class="t" style="left:258px;width:65px;text-align:right;top:140px;letter-spacing:-0.1px"></span>
<span class="t" style="left:336px;top:140px;letter-spacing:-0.05px">c:\Program Files\</span>
<span class="t" style="left:673px;top:140px">0/2</span>
<svg style="left:2px;top:155px" width="16" height="16"><use href="#i_folder"/></svg>
<span class="t" style="left:20px;top:157px;letter-spacing:-0.3px">Program Files\</span>
<span class="t" style="left:130px;top:157px;letter-spacing:-0.25px">Goosja</span>
<span class="t" style="left:206px;top:157px;letter-spacing:-0.15px">Directory</span>
<span class="t" style="left:258px;width:65px;text-align:right;top:157px;letter-spacing:-0.1px"></span>
<span class="t" style="left:336px;top:157px;letter-spacing:-0.05px">C:\Program Files\</span>
<span class="t" style="left:673px;top:157px">0/5</span>
<svg style="left:2px;top:172px" width="16" height="16"><use href="#i_folder"/></svg>
<span class="t" style="left:20px;top:174px;letter-spacing:-0.3px">Program Files\</span>
<span class="t" style="left:130px;top:174px;letter-spacing:-0.25px">Elligaaa</span>
<span class="t" style="left:206px;top:174px;letter-spacing:-0.15px">Directory</span>
<span class="t" style="left:258px;width:65px;text-align:right;top:174px;letter-spacing:-0.1px"></span>
<span class="t" style="left:336px;top:174px;letter-spacing:-0.05px">c:\Program Files\</span>
<span class="t" style="left:673px;top:174px">3/5</span>
<svg style="left:2px;top:189px" width="16" height="16"><use href="#i_folder"/></svg>
<span class="t" style="left:20px;top:191px;letter-spacing:-0.3px">Program Files\</span>
<span class="t" style="left:130px;top:191px;letter-spacing:-0.25px">Eilish</span>
<span class="t" style="left:206px;top:191px;letter-spacing:-0.15px">Directory</span>
<span class="t" style="left:258px;width:65px;text-align:right;top:191px;letter-spacing:-0.1px"></span>
<span class="t" style="left:336px;top:191px;letter-spacing:-0.05px">c:\Program Files\</span>
<span class="t" style="left:673px;top:191px">6/6</span>
<svg style="left:2px;top:206px" width="16" height="16"><use href="#i_folder"/></svg>
<span class="t" style="left:20px;top:208px;letter-spacing:-0.3px">Program Files\</span>
<span class="t" style="left:130px;top:208px;letter-spacing:-0.25px">RDK</span>
<span class="t" style="left:206px;top:208px;letter-spacing:-0.15px">Directory</span>
<span class="t" style="left:258px;width:65px;text-align:right;top:208px;letter-spacing:-0.1px"></span>
<span class="t" style="left:336px;top:208px;letter-spacing:-0.05px">C:\Program Files\</span>
<span class="t" style="left:673px;top:208px">14/15</span>
<svg style="left:2px;top:223px" width="16" height="16"><use href="#i_folder"/></svg>
<span class="t" style="left:20px;top:225px;letter-spacing:-0.3px">Program Files\</span>
<span class="t" style="left:130px;top:225px;letter-spacing:-0.25px">Lisij</span>
<span class="t" style="left:206px;top:225px;letter-spacing:-0.15px">Directory</span>
<span class="t" style="left:258px;width:65px;text-align:right;top:225px;letter-spacing:-0.1px"></span>
<span class="t" style="left:336px;top:225px;letter-spacing:-0.05px">c:\Program Files\</span>
<span class="t" style="left:673px;top:225px">1/5</span>
<svg style="left:2px;top:240px" width="16" height="16"><use href="#i_folder"/></svg>
<span class="t" style="left:20px;top:242px;letter-spacing:-0.3px">Program Files\</span>
<span class="t" style="left:130px;top:242px;letter-spacing:-0.25px">Sfinxa</span>
<span class="t" style="left:206px;top:242px;letter-spacing:-0.15px">Directory</span>
<span class="t" style="left:258px;width:65px;text-align:right;top:242px;letter-spacing:-0.1px"></span>
<span class="t" style="left:336px;top:242px;letter-spacing:-0.05px">c:\Program Files\</span>
<span class="t" style="left:673px;top:242px">3/3</span>
<svg style="left:2px;top:257px" width="16" height="16"><use href="#i_folder"/></svg>
<span class="t" style="left:20px;top:259px;letter-spacing:-0.3px">Program Files\</span>
<span class="t" style="left:130px;top:259px;letter-spacing:-0.25px">VaDiLa</span>
<span class="t" style="left:206px;top:259px;letter-spacing:-0.15px">Directory</span>
<span class="t" style="left:258px;width:65px;text-align:right;top:259px;letter-spacing:-0.1px"></span>
<span class="t" style="left:336px;top:259px;letter-spacing:-0.05px">c:\Program Files\</span>
<span class="t" style="left:673px;top:259px">7/7</span>
<svg style="left:2px;top:274px" width="16" height="16"><use href="#i_folder"/></svg>
<span class="t" style="left:20px;top:276px;letter-spacing:-0.3px">Program Files\</span>
<span class="t" style="left:130px;top:276px;letter-spacing:-0.25px">xPycckuux</span>
<span class="t" style="left:206px;top:276px;letter-spacing:-0.15px">Directory</span>
<span class="t" style="left:258px;width:65px;text-align:right;top:276px;letter-spacing:-0.1px"></span>
<span class="t" style="left:336px;top:276px;letter-spacing:-0.05px">C:\Program Files\</span>
<span class="t" style="left:673px;top:276px">10/10</span>
<svg style="left:2px;top:291px" width="16" height="16"><use href="#i_folder"/></svg>
<span class="t" style="left:20px;top:293px;letter-spacing:-0.3px">CA\</span>
<span class="t" style="left:130px;top:293px;letter-spacing:-0.25px">Argentina-J...</span>
<span class="t" style="left:206px;top:293px;letter-spacing:-0.15px">Directory</span>
<span class="t" style="left:258px;width:65px;text-align:right;top:293px;letter-spacing:-0.1px"></span>
<span class="t" style="left:336px;top:293px;letter-spacing:-0.05px">c:\Program Files\CA\</span>
<span class="t" style="left:673px;top:293px">9/9</span>
<svg style="left:2px;top:308px" width="16" height="16"><use href="#i_folder"/></svg>
<span class="t" style="left:20px;top:310px;letter-spacing:-0.3px">eTrust EZ Armor\</span>
<span class="t" style="left:130px;top:310px;letter-spacing:-0.25px">Argentina-J...</span>
<span class="t" style="left:206px;top:310px;letter-spacing:-0.15px">Directory</span>
<span class="t" style="left:258px;width:65px;text-align:right;top:310px;letter-spacing:-0.1px"></span>
<span class="t" style="left:336px;top:310px;letter-spacing:-0.05px">c:\Program Files\CA\eTrust EZ Armor\</span>
<span class="t" style="left:673px;top:310px">9/9</span>
<svg style="left:2px;top:325px" width="16" height="16"><use href="#i_folder"/></svg>
<span class="t" style="left:20px;top:327px;letter-spacing:-0.3px">eTrust EZ Antivirus\</span>
<span class="t" style="left:130px;top:327px;letter-spacing:-0.25px">Argentina-J...</span>
<span class="t" style="left:206px;top:327px;letter-spacing:-0.15px">Directory</span>
<span class="t" style="left:258px;width:65px;text-align:right;top:327px;letter-spacing:-0.1px"></span>
<span class="t" style="left:336px;top:327px;letter-spacing:-0.05px">c:\Program Files\CA\eTrust EZ Armor\eTrust EZ Antivirus\</span>
<span class="t" style="left:673px;top:327px">9/9</span>
<svg style="left:2px;top:342px" width="16" height="16"><use href="#i_app"/></svg>
<span class="t" style="left:20px;top:344px;letter-spacing:-0.3px">OnDemandScan.log</span>
<span class="t" style="left:130px;top:344px;letter-spacing:-0.25px">Argentina-J...</span>
<span class="t" style="left:206px;top:344px;letter-spacing:-0.15px">log</span>
<span class="t" style="left:258px;width:65px;text-align:right;top:344px;letter-spacing:-0.1px">1.90 KiB</span>
<span class="t" style="left:336px;top:344px;letter-spacing:-0.05px">c:\Program Files\CA\eTrust EZ Armor\eTrust EZ Antivirus\</span>
<span class="t" style="left:673px;top:344px">9/9</span>
<svg style="left:2px;top:359px" width="16" height="16"><use href="#i_txt"/></svg>
<span class="t" style="left:20px;top:361px;letter-spacing:-0.3px">schedule.txt</span>
<span class="t" style="left:130px;top:361px;letter-spacing:-0.25px">Argentina-J...</span>
<span class="t" style="left:206px;top:361px;letter-spacing:-0.15px">txt</span>
<span class="t" style="left:258px;width:65px;text-align:right;top:361px;letter-spacing:-0.1px">55.05 KiB</span>
<span class="t" style="left:336px;top:361px;letter-spacing:-0.05px">c:\Program Files\CA\eTrust EZ Armor\eTrust EZ Antivirus\</span>
<span class="t" style="left:673px;top:361px">9/9</span>
<svg style="left:2px;top:376px" width="16" height="16"><use href="#i_app"/></svg>
<span class="t" style="left:20px;top:378px;letter-spacing:-0.3px">boot.dat</span>
<span class="t" style="left:130px;top:378px;letter-spacing:-0.25px">Argentina-J...</span>
<span class="t" style="left:206px;top:378px;letter-spacing:-0.15px">dat</span>
<span class="t" style="left:258px;width:65px;text-align:right;top:378px;letter-spacing:-0.1px">57.74 KiB</span>
<span class="t" style="left:336px;top:378px;letter-spacing:-0.05px">c:\Program Files\CA\eTrust EZ Armor\eTrust EZ Antivirus\</span>
<span class="t" style="left:673px;top:378px">9/9</span>
<svg style="left:2px;top:393px" width="16" height="16"><use href="#i_folder"/></svg>
<span class="t" style="left:20px;top:395px;letter-spacing:-0.3px">Codec Pack - All In...</span>
<span class="t" style="left:130px;top:395px;letter-spacing:-0.25px">RDK</span>
<span class="t" style="left:206px;top:395px;letter-spacing:-0.15px">Directory</span>
<span class="t" style="left:258px;width:65px;text-align:right;top:395px;letter-spacing:-0.1px"></span>
<span class="t" style="left:336px;top:395px;letter-spacing:-0.05px">C:\Program Files\Codec Pack - All In 1\</span>
<span class="t" style="left:673px;top:395px">14/15</span>
<svg style="left:2px;top:410px" width="16" height="16"><use href="#i_app"/></svg>
<span class="t" style="left:20px;top:412px;letter-spacing:-0.3px">xvid.ico</span>
<span class="t" style="left:130px;top:412px;letter-spacing:-0.25px">RDK</span>
<span class="t" style="left:206px;top:412px;letter-spacing:-0.15px">ico</span>
<span class="t" style="left:258px;width:65px;text-align:right;top:412px;letter-spacing:-0.1px">1.05 KiB</span>
<span class="t" style="left:336px;top:412px;letter-spacing:-0.05px">C:\Program Files\Codec Pack - All In 1\</span>
<span class="t" style="left:673px;top:412px">14/15</span>
<svg style="left:2px;top:427px" width="16" height="16"><use href="#i_bmp"/></svg>
<span class="t" style="left:20px;top:429px;letter-spacing:-0.3px">irunin.bmp</span>
<span class="t" style="left:130px;top:429px;letter-spacing:-0.25px">RDK</span>
<span class="t" style="left:206px;top:429px;letter-spacing:-0.15px">bmp</span>
<span class="t" style="left:258px;width:65px;text-align:right;top:429px;letter-spacing:-0.1px">7.94 KiB</span>
<span class="t" style="left:336px;top:429px;letter-spacing:-0.05px">C:\Program Files\Codec Pack - All In 1\</span>
<span class="t" style="left:673px;top:429px">14/15</span>
<svg style="left:2px;top:444px" width="16" height="16"><use href="#i_app"/></svg>
<span class="t" style="left:20px;top:446px;letter-spacing:-0.3px">irunin.lng</span>
<span class="t" style="left:130px;top:446px;letter-spacing:-0.25px">RDK</span>
<span class="t" style="left:206px;top:446px;letter-spacing:-0.15px">lng</span>
<span class="t" style="left:258px;width:65px;text-align:right;top:446px;letter-spacing:-0.1px">15.56 KiB</span>
<span class="t" style="left:336px;top:446px;letter-spacing:-0.05px">C:\Program Files\Codec Pack - All In 1\</span>
<span class="t" style="left:673px;top:446px">14/15</span>
<svg style="left:2px;top:461px" width="16" height="16"><use href="#i_txt"/></svg>
<span class="t" style="left:20px;top:463px;letter-spacing:-0.3px">irunin.ini</span>
<span class="t" style="left:130px;top:463px;letter-spacing:-0.25px">RDK</span>
<span class="t" style="left:206px;top:463px;letter-spacing:-0.15px">ini</span>
<span class="t" style="left:258px;width:65px;text-align:right;top:463px;letter-spacing:-0.1px">18.27 KiB</span>
<span class="t" style="left:336px;top:463px;letter-spacing:-0.05px">C:\Program Files\Codec Pack - All In 1\</span>
<span class="t" style="left:673px;top:463px">14/15</span>
<svg style="left:2px;top:478px" width="16" height="16"><use href="#i_app"/></svg>
<span class="t" style="left:20px;top:480px;letter-spacing:-0.3px">irunin.dat</span>
<span class="t" style="left:130px;top:480px;letter-spacing:-0.25px">RDK</span>
<span class="t" style="left:206px;top:480px;letter-spacing:-0.15px">dat</span>
<span class="t" style="left:258px;width:61px;text-align:right;top:480px;letter-spacing:-0.1px">185.69 ...</span>
<span class="t" style="left:336px;top:480px;letter-spacing:-0.05px">C:\Program Files\Codec Pack - All In 1\</span>
<span class="t" style="left:673px;top:480px">14/15</span>
<svg style="left:2px;top:495px" width="16" height="16"><use href="#i_folder"/></svg>
<span class="t" style="left:20px;top:497px;letter-spacing:-0.3px">Java\</span>
<span class="t" style="left:130px;top:497px;letter-spacing:-0.25px">VaDiLa</span>
<span class="t" style="left:206px;top:497px;letter-spacing:-0.15px">Directory</span>
<span class="t" style="left:258px;width:65px;text-align:right;top:497px;letter-spacing:-0.1px"></span>
<span class="t" style="left:336px;top:497px;letter-spacing:-0.05px">c:\Program Files\Java\</span>
<span class="t" style="left:673px;top:497px">7/7</span>
<svg style="left:2px;top:512px" width="16" height="16"><use href="#i_folder"/></svg>
<span class="t" style="left:20px;top:514px;letter-spacing:-0.3px">j2re1.4.1\</span>
<span class="t" style="left:130px;top:514px;letter-spacing:-0.25px">VaDiLa</span>
<span class="t" style="left:206px;top:514px;letter-spacing:-0.15px">Directory</span>
<span class="t" style="left:258px;width:65px;text-align:right;top:514px;letter-spacing:-0.1px"></span>
<span class="t" style="left:336px;top:514px;letter-spacing:-0.05px">c:\Program Files\Java\j2re1.4.1\</span>
<span class="t" style="left:673px;top:514px">7/7</span>
<svg style="left:2px;top:529px" width="16" height="16"><use href="#i_app"/></svg>
<span class="t" style="left:20px;top:531px;letter-spacing:-0.3px">CHANGES</span>
<span class="t" style="left:130px;top:531px;letter-spacing:-0.25px">VaDiLa</span>
<span class="t" style="left:206px;top:531px;letter-spacing:-0.15px"></span>
<span class="t" style="left:258px;width:65px;text-align:right;top:531px;letter-spacing:-0.1px">1.10 KiB</span>
<span class="t" style="left:336px;top:531px;letter-spacing:-0.05px">c:\Program Files\Java\j2re1.4.1\</span>
<span class="t" style="left:673px;top:531px">7/7</span>
<svg style="left:2px;top:546px" width="16" height="16"><use href="#i_app"/></svg>
<span class="t" style="left:20px;top:548px;letter-spacing:-0.3px">COPYRIGHT</span>
<span class="t" style="left:130px;top:548px;letter-spacing:-0.25px">VaDiLa</span>
<span class="t" style="left:206px;top:548px;letter-spacing:-0.15px"></span>
<span class="t" style="left:258px;width:65px;text-align:right;top:548px;letter-spacing:-0.1px">4.41 KiB</span>
<span class="t" style="left:336px;top:548px;letter-spacing:-0.05px">c:\Program Files\Java\j2re1.4.1\</span>
<span class="t" style="left:673px;top:548px">7/7</span>
<svg style="left:2px;top:563px" width="16" height="16"><use href="#i_app"/></svg>
<span class="t" style="left:20px;top:565px;letter-spacing:-0.3px"></span>
<span class="t" style="left:130px;top:565px;letter-spacing:-0.25px"></span>
<span class="t" style="left:206px;top:565px;letter-spacing:-0.15px"></span>
<span class="t" style="left:258px;width:65px;text-align:right;top:565px;letter-spacing:-0.1px"></span>
<span class="t" style="left:336px;top:565px;letter-spacing:-0.05px"></span>
<span class="t" style="left:673px;top:565px"></span>
</div>
<div style="left:1008px;top:76px;width:14px;height:584px;background:#e0e0e0;"></div>
<div style="left:1008px;top:76px;width:14px;height:14px;background:#c0c0c0;"></div>
<div style="left:1008px;top:76px;width:13px;height:1px;background:#e3e3e3;"></div>
<div style="left:1008px;top:76px;width:1px;height:13px;background:#e3e3e3;"></div>
<div style="left:1008px;top:89px;width:14px;height:1px;background:#000;"></div>
<div style="left:1021px;top:76px;width:1px;height:14px;background:#000;"></div>
<div style="left:1009px;top:88px;width:12px;height:1px;background:#808080;"></div>
<div style="left:1020px;top:77px;width:1px;height:12px;background:#808080;"></div>
<div style="left:1009px;top:77px;width:11px;height:1px;background:#e0e0e0;"></div>
<div style="left:1009px;top:77px;width:1px;height:11px;background:#e0e0e0;"></div>
<div style="left:1014px;top:80px;width:1px;height:1px;background:#000;"></div>
<div style="left:1013px;top:81px;width:3px;height:1px;background:#000;"></div>
<div style="left:1012px;top:82px;width:5px;height:1px;background:#000;"></div>
<div style="left:1008px;top:106px;width:14px;height:8px;background:#c0c0c0;"></div>
<div style="left:1008px;top:106px;width:13px;height:1px;background:#e3e3e3;"></div>
<div style="left:1008px;top:106px;width:1px;height:7px;background:#e3e3e3;"></div>
<div style="left:1008px;top:113px;width:14px;height:1px;background:#000;"></div>
<div style="left:1021px;top:106px;width:1px;height:8px;background:#000;"></div>
<div style="left:1009px;top:112px;width:12px;height:1px;background:#808080;"></div>
<div style="left:1020px;top:107px;width:1px;height:6px;background:#808080;"></div>
<div style="left:1009px;top:107px;width:11px;height:1px;background:#e0e0e0;"></div>
<div style="left:1009px;top:107px;width:1px;height:5px;background:#e0e0e0;"></div>
<div style="left:1008px;top:646px;width:14px;height:14px;background:#c0c0c0;"></div>
<div style="left:1008px;top:646px;width:13px;height:1px;background:#e3e3e3;"></div>
<div style="left:1008px;top:646px;width:1px;height:13px;background:#e3e3e3;"></div>
<div style="left:1008px;top:659px;width:14px;height:1px;background:#000;"></div>
<div style="left:1021px;top:646px;width:1px;height:14px;background:#000;"></div>
<div style="left:1009px;top:658px;width:12px;height:1px;background:#808080;"></div>
<div style="left:1020px;top:647px;width:1px;height:12px;background:#808080;"></div>
<div style="left:1009px;top:647px;width:11px;height:1px;background:#e0e0e0;"></div>
<div style="left:1009px;top:647px;width:1px;height:11px;background:#e0e0e0;"></div>
<div style="left:1012px;top:653px;width:5px;height:1px;background:#000;"></div>
<div style="left:1013px;top:654px;width:3px;height:1px;background:#000;"></div>
<div style="left:1014px;top:655px;width:1px;height:1px;background:#000;"></div>
<div style="left:222px;top:660px;width:786px;height:14px;background:#e0e0e0;"></div>
<div style="left:222px;top:660px;width:14px;height:14px;background:#c0c0c0;"></div>
<div style="left:222px;top:660px;width:13px;height:1px;background:#e3e3e3;"></div>
<div style="left:222px;top:660px;width:1px;height:13px;background:#e3e3e3;"></div>
<div style="left:222px;top:673px;width:14px;height:1px;background:#000;"></div>
<div style="left:235px;top:660px;width:1px;height:14px;background:#000;"></div>
<div style="left:223px;top:672px;width:12px;height:1px;background:#808080;"></div>
<div style="left:234px;top:661px;width:1px;height:12px;background:#808080;"></div>
<div style="left:223px;top:661px;width:11px;height:1px;background:#e0e0e0;"></div>
<div style="left:223px;top:661px;width:1px;height:11px;background:#e0e0e0;"></div>
<div style="left:227px;top:666px;width:1px;height:1px;background:#000;"></div>
<div style="left:228px;top:665px;width:1px;height:3px;background:#000;"></div>
<div style="left:229px;top:664px;width:1px;height:5px;background:#000;"></div>
<div style="left:236px;top:660px;width:472px;height:14px;background:#c0c0c0;"></div>
<div style="left:236px;top:660px;width:471px;height:1px;background:#e3e3e3;"></div>
<div style="left:236px;top:660px;width:1px;height:13px;background:#e3e3e3;"></div>
<div style="left:236px;top:673px;width:472px;height:1px;background:#000;"></div>
<div style="left:707px;top:660px;width:1px;height:14px;background:#000;"></div>
<div style="left:237px;top:672px;width:470px;height:1px;background:#808080;"></div>
<div style="left:706px;top:661px;width:1px;height:12px;background:#808080;"></div>
<div style="left:237px;top:661px;width:469px;height:1px;background:#e0e0e0;"></div>
<div style="left:237px;top:661px;width:1px;height:11px;background:#e0e0e0;"></div>
<div style="left:994px;top:660px;width:14px;height:14px;background:#c0c0c0;"></div>
<div style="left:994px;top:660px;width:13px;height:1px;background:#e3e3e3;"></div>
<div style="left:994px;top:660px;width:1px;height:13px;background:#e3e3e3;"></div>
<div style="left:994px;top:673px;width:14px;height:1px;background:#000;"></div>
<div style="left:1007px;top:660px;width:1px;height:14px;background:#000;"></div>
<div style="left:995px;top:672px;width:12px;height:1px;background:#808080;"></div>
<div style="left:1006px;top:661px;width:1px;height:12px;background:#808080;"></div>
<div style="left:995px;top:661px;width:11px;height:1px;background:#e0e0e0;"></div>
<div style="left:995px;top:661px;width:1px;height:11px;background:#e0e0e0;"></div>
<div style="left:1000px;top:664px;width:1px;height:5px;background:#000;"></div>
<div style="left:1001px;top:665px;width:1px;height:3px;background:#000;"></div>
<div style="left:1002px;top:666px;width:1px;height:1px;background:#000;"></div>
<div style="left:1008px;top:660px;width:14px;height:14px;background:#c0c0c0;"></div>
<div style="left:0px;top:680px;width:13px;height:13px;background:#faf8f1;"></div>
<div style="left:0px;top:680px;width:12px;height:1px;background:#808080;"></div>
<div style="left:0px;top:680px;width:1px;height:12px;background:#808080;"></div>
<div style="left:1px;top:681px;width:10px;height:1px;background:#000;"></div>
<div style="left:1px;top:681px;width:1px;height:10px;background:#000;"></div>
<div style="left:0px;top:692px;width:13px;height:1px;background:#e3e3e3;"></div>
<div style="left:12px;top:680px;width:1px;height:13px;background:#e3e3e3;"></div>
<div style="left:1px;top:691px;width:11px;height:1px;background:#c0c0c0;"></div>
<div style="left:11px;top:681px;width:1px;height:11px;background:#c0c0c0;"></div>
<svg style="position:absolute;left:3px;top:683px" width="7" height="7" viewBox="0 0 7 7"><path d="M0 2h1v1h1v1h1v-1h1v-1h1v-1h1v-1h1v3h-1v1h-1v1h-1v1h-1v1h-1v-1h-1v-1h-1v-1h-1z" fill="#000"/></svg>
<div style="left:17px;top:678px;width:791px;height:18px;background:#c0c0c0;"></div>
<div style="left:17px;top:678px;width:791px;height:1px;background:#808080;"></div>
<div style="left:17px;top:678px;width:1px;height:18px;background:#808080;"></div>
<div style="left:17px;top:695px;width:791px;height:1px;background:#e3e3e3;"></div>
<div style="left:807px;top:678px;width:1px;height:18px;background:#e3e3e3;"></div>
<span class="t " style="left:19px;top:681px;">Searching for Program Files...</span>
<div style="left:810px;top:678px;width:98px;height:18px;background:#c0c0c0;"></div>
<div style="left:810px;top:678px;width:98px;height:1px;background:#808080;"></div>
<div style="left:810px;top:678px;width:1px;height:18px;background:#808080;"></div>
<div style="left:810px;top:695px;width:98px;height:1px;background:#e3e3e3;"></div>
<div style="left:907px;top:678px;width:1px;height:18px;background:#e3e3e3;"></div>
<span class="t " style="left:812px;top:681px;">2303 Items</span>
<div style="left:910px;top:678px;width:98px;height:18px;background:#c0c0c0;"></div>
<div style="left:910px;top:678px;width:98px;height:1px;background:#808080;"></div>
<div style="left:910px;top:678px;width:1px;height:18px;background:#808080;"></div>
<div style="left:910px;top:695px;width:98px;height:1px;background:#e3e3e3;"></div>
<div style="left:1007px;top:678px;width:1px;height:18px;background:#e3e3e3;"></div>
<span class="t " style="left:912px;top:681px;">139 Filtered</span>
<div style="left:0px;top:701px;width:1024px;height:1px;background:#000;"></div>
<div style="left:0px;top:702px;width:1024px;height:1px;background:#e3e3e3;"></div>
<div style="left:0px;top:703px;width:1024px;height:1px;background:#e3e3e3;"></div>
<div style="left:0px;top:704px;width:1024px;height:1px;background:#000;"></div>
<svg style="left:0;top:700px" width="1024" height="24" viewBox="0 0 1024 24"><path d="M8.5 19.5H85.5" stroke="#808080" stroke-width="1"/><path d="M93.5 19.5H188.5" stroke="#00e000" stroke-width="1"/><path d="M196.5 19.5H296.5" stroke="#00e000" stroke-width="1"/><path d="M304.5 19.5H420.5" stroke="#00e000" stroke-width="1"/><path d="M1.5 4.5L8.5 19.5" stroke="#000" stroke-width="1"/><path d="M86.5 4.5L93.5 19.5" stroke="#000" stroke-width="1"/><path d="M189.5 4.5L196.5 19.5" stroke="#000" stroke-width="1"/><path d="M297.5 4.5L304.5 19.5" stroke="#000" stroke-width="1"/><path d="M85.5 19.5L88.5 13" stroke="#808080" stroke-width="1"/><path d="M188.5 19.5L191.5 13" stroke="#00e000" stroke-width="1"/><path d="M296.5 19.5L299.5 13" stroke="#00e000" stroke-width="1"/><path d="M420.5 19.5L423.5 13" stroke="#00e000" stroke-width="1"/><path d="M421.5 4.5L428.5 19.5H531.5L538.5 4.5z" fill="#faf8f1"/><path d="M421.5 4.5H538.5M428.5 19.5H531.5L538.5 4.5" stroke="#6070f0" stroke-width="1" fill="none"/><path d="M421.5 4.5L428.5 19.5" stroke="#000" stroke-width="1"/><path d="M538.5 4.5H1024" stroke="#000" stroke-width="1"/></svg>
<span class="t " style="left:13px;top:705px;letter-spacing:-0.2px">Favorite Hubs</span>
<span class="t " style="left:98px;top:705px;letter-spacing:-0.35px">Baltic mx hub (m...</span>
<span class="t b" style="left:201px;top:705px;letter-spacing:0.6px">-=[...LiVe...]=-...</span>
<span class="t b" style="left:309px;top:705px;letter-spacing:0.28px">Unlimited Opport...</span>
<span class="t " style="left:433px;top:705px;letter-spacing:-0.33px">Search - Program...</span>
<div style="left:1010px;top:705px;width:14px;height:15px;background:#c0c0c0;"></div>
<div style="left:1010px;top:705px;width:13px;height:1px;background:#e3e3e3;"></div>
<div style="left:1010px;top:705px;width:1px;height:14px;background:#e3e3e3;"></div>
<div style="left:1023px;top:705px;width:1px;height:15px;background:#000;"></div>
<div style="left:1011px;top:719px;width:12px;height:1px;background:#808080;"></div>
<div style="left:1022px;top:706px;width:1px;height:13px;background:#808080;"></div>
<svg style="left:1012px;top:711px" width="9" height="6" viewBox="0 0 9 6"><path d="M0.5 0.5L3 3L0.5 5.5M4.5 0.5L7 3L4.5 5.5" stroke="#808080" stroke-width="1.3" fill="none"/></svg>
<div style="left:0px;top:720px;width:1024px;height:1px;background:#d0c8d0;"></div>
<div style="left:0px;top:722px;width:429px;height:18px;background:#c0c0c0;"></div>
<div style="left:0px;top:722px;width:429px;height:1px;background:#808080;"></div>
<div style="left:0px;top:722px;width:1px;height:18px;background:#808080;"></div>
<div style="left:0px;top:739px;width:429px;height:1px;background:#e3e3e3;"></div>
<div style="left:428px;top:722px;width:1px;height:18px;background:#e3e3e3;"></div>
<div style="left:430px;top:722px;width:39px;height:18px;background:#c0c0c0;"></div>
<div style="left:430px;top:722px;width:39px;height:1px;background:#808080;"></div>
<div style="left:430px;top:722px;width:1px;height:18px;background:#808080;"></div>
<div style="left:430px;top:739px;width:39px;height:1px;background:#e3e3e3;"></div>
<div style="left:468px;top:722px;width:1px;height:18px;background:#e3e3e3;"></div>
<div style="left:471px;top:722px;width:48px;height:18px;background:#c0c0c0;"></div>
<div style="left:471px;top:722px;width:48px;height:1px;background:#808080;"></div>
<div style="left:471px;top:722px;width:1px;height:18px;background:#808080;"></div>
<div style="left:471px;top:739px;width:48px;height:1px;background:#e3e3e3;"></div>
<div style="left:518px;top:722px;width:1px;height:18px;background:#e3e3e3;"></div>
<span class="t " style="left:473px;top:725px;">H: 3/0/0</span>
<div style="left:521px;top:722px;width:59px;height:18px;background:#c0c0c0;"></div>
<div style="left:521px;top:722px;width:59px;height:1px;background:#808080;"></div>
<div style="left:521px;top:722px;width:1px;height:18px;background:#808080;"></div>
<div style="left:521px;top:739px;width:59px;height:1px;background:#e3e3e3;"></div>
<div style="left:579px;top:722px;width:1px;height:18px;background:#e3e3e3;"></div>
<span class="t " style="left:523px;top:725px;">Slots: 3/9</span>
<div style="left:581px;top:722px;width:96px;height:18px;background:#c0c0c0;"></div>
<div style="left:581px;top:722px;width:96px;height:1px;background:#808080;"></div>
<div style="left:581px;top:722px;width:1px;height:18px;background:#808080;"></div>
<div style="left:581px;top:739px;width:96px;height:1px;background:#e3e3e3;"></div>
<div style="left:676px;top:722px;width:1px;height:18px;background:#e3e3e3;"></div>
<span class="t " style="left:583px;top:725px;">D: 509.14 MiB</span>
<div style="left:678px;top:722px;width:88px;height:18px;background:#c0c0c0;"></div>
<div style="left:678px;top:722px;width:88px;height:1px;background:#808080;"></div>
<div style="left:678px;top:722px;width:1px;height:18px;background:#808080;"></div>
<div style="left:678px;top:739px;width:88px;height:1px;background:#e3e3e3;"></div>
<div style="left:765px;top:722px;width:1px;height:18px;background:#e3e3e3;"></div>
<span class="t " style="left:680px;top:725px;">U: 44.15 MiB</span>
<div style="left:767px;top:722px;width:120px;height:18px;background:#c0c0c0;"></div>
<div style="left:767px;top:722px;width:120px;height:1px;background:#808080;"></div>
<div style="left:767px;top:722px;width:1px;height:18px;background:#808080;"></div>
<div style="left:767px;top:739px;width:120px;height:1px;background:#e3e3e3;"></div>
<div style="left:886px;top:722px;width:1px;height:18px;background:#e3e3e3;"></div>
<span class="t " style="left:769px;top:725px;">D: 110.20 KiB/s (3)</span>
<div style="left:888px;top:722px;width:120px;height:18px;background:#c0c0c0;"></div>
<div style="left:888px;top:722px;width:120px;height:1px;background:#808080;"></div>
<div style="left:888px;top:722px;width:1px;height:18px;background:#808080;"></div>
<div style="left:888px;top:739px;width:120px;height:1px;background:#e3e3e3;"></div>
<div style="left:1007px;top:722px;width:1px;height:18px;background:#e3e3e3;"></div>
<span class="t " style="left:890px;top:725px;">U: 64.19 KiB/s (6)</span>
<div style="left:0px;top:742px;width:1024px;height:1px;background:#e0e0e0;"></div>
</div></body></html>
